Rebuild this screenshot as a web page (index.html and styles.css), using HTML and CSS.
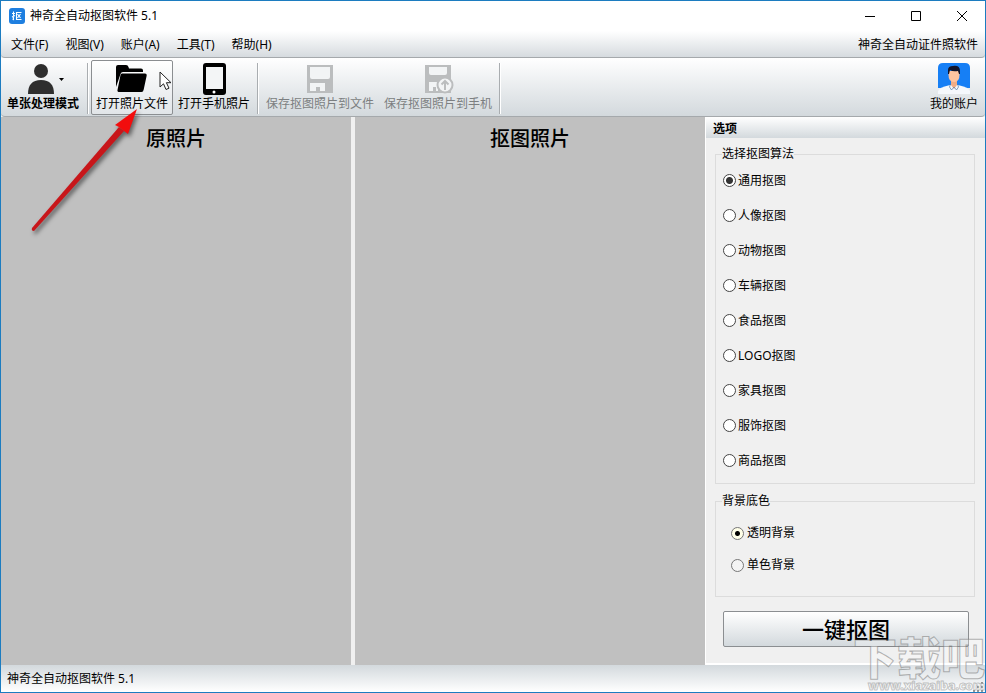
FILE: index.html
```html
<!DOCTYPE html>
<html lang="zh-CN">
<head>
  <meta charset="UTF-8">
  <meta name="viewport" content="width=device-width, initial-scale=1.0">
  <title>神奇全自动抠图软件 5.1</title>
  <link rel="stylesheet" href="styles.css">
</head>
<body>
  <div class="window">
    <header class="title-bar">
      <svg class="app-icon" width="16" height="16" viewBox="0 0 16 16" aria-hidden="true">
        <rect width="16" height="16" rx="3" fill="#1e7fe0"/>
        <path d="M3 5.500h3M4.500 3.500v8l-1-.5M3 9l3-1.500M12.500 4.500h-5v7h5M8.500 6l3 4M11.500 6l-3 4" fill="none" stroke="#fff" stroke-width="1.100"/>
      </svg>
      <span class="app-name">神奇全自动抠图软件 5.1</span>
      <div class="window-controls">
        <button type="button" aria-label="最小化"><svg width="12" height="12" viewBox="0 0 12 12"><path d="M1 6.500h10" /></svg></button>
        <button type="button" aria-label="最大化"><svg width="12" height="12" viewBox="0 0 12 12"><path d="M1.500 1.500h9v9h-9z"/></svg></button>
        <button type="button" aria-label="关闭"><svg width="12" height="12" viewBox="0 0 12 12"><path d="M1 1l10 10M11 1L1 11"/></svg></button>
      </div>
    </header>

    <nav class="menu-bar">
      <a href="#">文件(F)</a>
      <a href="#">视图(V)</a>
      <a href="#">账户(A)</a>
      <a href="#">工具(T)</a>
      <a href="#">帮助(H)</a>
      <a href="#" class="menu-right">神奇全自动证件照软件</a>
    </nav>

    <div class="toolbar">
      <button type="button" class="tool tool-mode">
        <span class="tool-icons">
          <svg width="32" height="32" viewBox="0 0 32 32">
            <circle cx="16" cy="8" r="7" fill="#2e2e2e"/>
            <path d="M3 31c0-9 4-14 13-14s13 5 13 14z" fill="#2e2e2e"/>
          </svg>
          <svg class="caret" width="5" height="3" viewBox="0 0 5 3"><path d="M0 0h5L2.500 3z"/></svg>
        </span>
        <span>单张处理模式</span>
      </button>
      <span class="separator"></span>
      <button type="button" class="tool tool-active">
        <svg width="32" height="32" viewBox="0 0 32 32">
          <path d="M0 24V4q0-2 2-2h8q2 0 2.500 2l.5 1.500h12q2 0 2 2V9H7q-2 0-2.500 2z"/>
          <path d="M6 10.500h23q2 0 1.700 2l-3 14Q27.300 29 25.500 29H3.500Q1 29 1.500 27l3-15q.3-1.500 1.500-1.500z"/>
        </svg>
        <span>打开照片文件</span>
        <svg class="cursor" width="14" height="21" viewBox="0 0 14 21" aria-hidden="true">
          <path d="M1 1v15l3.500-3.200L7 18.500l3-1.300-2.600-5.500H12z" fill="#fff" stroke="#222" stroke-width="1"/>
        </svg>
      </button>
      <button type="button" class="tool">
        <svg width="32" height="32" viewBox="0 0 32 32">
          <rect x="5" y="0" width="23" height="32" rx="3"/>
          <rect x="8" y="4" width="17" height="22" fill="#f3f5f6"/>
          <circle cx="16" cy="29" r="1.500" fill="#fff"/>
        </svg>
        <span>打开手机照片</span>
      </button>
      <span class="separator"></span>
      <button type="button" class="tool tool-save" disabled>
        <svg width="32" height="32" viewBox="0 0 32 32">
          <path d="M3 2h26v28H3z" fill="#bbbdbe"/>
          <path d="M6 4h20v10q0 2-2 2H8q-2 0-2-2zM6 20h15v8h-5v-4h-4v4H6z" fill="#f2f4f5"/>
        </svg>
        <span>保存抠图照片到文件</span>
      </button>
      <button type="button" class="tool tool-save" disabled>
        <svg width="32" height="32" viewBox="0 0 32 32">
          <path d="M3 2h26v28H3z" fill="#bbbdbe"/>
          <path d="M7 4h18v6q0 2-2 2H9q-2 0-2-2zM7 19h9v9h-2v-4h-3v4H7z" fill="#f2f4f5"/>
          <circle cx="23" cy="22" r="7.500" fill="#f2f4f5" stroke="#bbbdbe" stroke-width="2"/>
          <path d="M23 27v-9M19.500 21.500l3.500-3.500 3.500 3.500" fill="none" stroke="#bbbdbe" stroke-width="2"/>
        </svg>
        <span>保存抠图照片到手机</span>
      </button>
      <span class="separator"></span>
      <button type="button" class="tool tool-account">
        <svg width="32" height="32" viewBox="0 0 32 32">
          <path d="M5 0h22q5 0 5 5v20H0V5q0-5 5-5z" fill="#167ff5"/>
          <path d="M0 28q2-4 12-6h8q10 2 12 6v3H0z" fill="#f5f8fc"/>
          <path d="M13 16h6v6l-3 4-3-4z" fill="#f0ad86"/>
          <path d="M10.500 8h11v4q0 7-5.500 7t-5.500-7z" fill="#ffc49f"/>
          <path d="M10 11V7q0-4 5-4 7-1 7 5v3h-1l-1-3q-5 1-8-1l-1 4z" fill="#12152a"/>
          <path d="M12.500 21l-1 3 2 3 2.500-3 2.500 3 2-3-1-3" fill="none" stroke="#527ca8" stroke-width=".7"/>
        </svg>
        <span>我的账户</span>
      </button>
    </div>

    <main class="workspace">
      <section class="photo-pane"><h2>原照片</h2></section>
      <div class="splitter"></div>
      <section class="photo-pane"><h2>抠图照片</h2></section>

      <aside class="options">
        <h3>选项</h3>
        <form class="options-form">
          <fieldset class="algorithms">
            <legend>选择抠图算法</legend>
            <label><input type="radio" name="algorithm" checked>通用抠图</label>
            <label><input type="radio" name="algorithm">人像抠图</label>
            <label><input type="radio" name="algorithm">动物抠图</label>
            <label><input type="radio" name="algorithm">车辆抠图</label>
            <label><input type="radio" name="algorithm">食品抠图</label>
            <label><input type="radio" name="algorithm">LOGO抠图</label>
            <label><input type="radio" name="algorithm">家具抠图</label>
            <label><input type="radio" name="algorithm">服饰抠图</label>
            <label><input type="radio" name="algorithm">商品抠图</label>
          </fieldset>
          <fieldset class="backgrounds">
            <legend>背景底色</legend>
            <label><input type="radio" name="background" checked>透明背景</label>
            <label><input type="radio" name="background">单色背景</label>
          </fieldset>
          <button type="button" class="run-button">一键抠图</button>
        </form>
      </aside>
    </main>

    <footer class="status-bar">
      <span>神奇全自动抠图软件 5.1</span>
      <svg class="grip" width="10" height="10" viewBox="0 0 10 10" aria-hidden="true">
        <path d="M8 0h2v2H8zM4 4h2v2H4zM8 4h2v2H8zM0 8h2v2H0zM4 8h2v2H4zM8 8h2v2H8z" fill="#999"/>
      </svg>
    </footer>

    <!-- Arrow pointing at the open file button -->
    <svg class="arrow" width="120" height="134" viewBox="0 0 120 134" aria-hidden="true">
      <path d="M5 122L92 21l5 4L7 125q-3 0-2-3z" fill="#c8161a"/>
      <path d="M88 19l22-16-9 25-4-3-5-4z" fill="#f20d0d"/>
    </svg>

    <div class="watermark">
      <span class="watermark-name">下载吧</span>
      <span class="watermark-url">www.xiazaiba.com</span>
    </div>
  </div>
</body>
</html>
```

FILE: styles.css
```css
* {
  box-sizing: border-box;
}

body {
  margin: 0;
  font-family: "Noto Sans", "Noto Sans CJK SC", sans-serif;
  font-size: 12px;
  line-height: 16px;
  color: #000;
}

button {
  font: inherit;
  color: inherit;
  padding: 0;
  border: none;
  background: none;
}

a {
  color: inherit;
  text-decoration: none;
}

.window {
  position: relative;
  display: flex;
  flex-direction: column;
  min-height: 100vh;
  border: 1px solid #1c7cc0;
  background: #f0f0f0;
  overflow: hidden;
}

/* Title bar */
.title-bar {
  display: flex;
  align-items: center;
  height: 30px;
  padding-left: 8px;
  background: #fff;
}

.app-name {
  margin-left: 5px;
}

.window-controls {
  display: flex;
  margin-left: auto;
}

.window-controls button {
  display: flex;
  align-items: center;
  justify-content: center;
  width: 46px;
  height: 30px;
}

.window-controls path {
  fill: none;
  stroke: #000;
}

/* Menu */
.menu-bar {
  display: flex;
  align-items: center;
  gap: 17px;
  height: 27px;
  padding: 2px 7px 0 10px;
  border-bottom: 1px solid #a5a9ac;
  border-radius: 0 0 4px 4px;
  background: linear-gradient(#fff, #d6dbdf);
}

.menu-right {
  margin-left: auto;
}

/* Toolbar */
.toolbar {
  display: flex;
  height: 59px;
  padding: 2px 0 1px;
  border-bottom: 1px solid #a5a9ac;
  border-radius: 0 0 4px 4px;
  background: linear-gradient(#fff, #d3d9dd);
}

.tool {
  position: relative;
  display: flex;
  flex-direction: column;
  align-items: center;
  justify-content: center;
  gap: 1px;
  width: 82px;
  border: 1px solid transparent;
  border-radius: 2px;
  white-space: nowrap;
}

.tool svg {
  display: block;
}

.tool-mode {
  width: 84px;
  font-weight: bold;
}

.tool-icons {
  display: flex;
  align-items: center;
}

.caret {
  margin-left: 2px;
  margin-right: -2px;
}

.tool-active {
  border-color: #8b8e91;
  background: linear-gradient(#fff, #e1e5e8);
}

.tool-save {
  width: 118px;
  color: #7c7f81;
}

.tool-account {
  width: 62px;
  margin-left: auto;
}

.tool .cursor {
  position: absolute;
  left: 67px;
  top: 10px;
}

.separator {
  width: 2px;
  margin: 3px 2px 1px;
  border-left: 1px solid #a9adb0;
  background: #fff;
}

/* Photo panes and options */
.workspace {
  display: grid;
  grid-template-columns: 1fr 4px 1fr 280px;
  flex: 1;
}

.photo-pane {
  background: #c0c0c0;
}

.splitter {
  background: #f0f0f0;
}

.photo-pane h2 {
  margin: 8px 0 0;
  font-size: 20px;
  font-weight: 500;
  line-height: 28px;
  text-align: center;
}

.options {
  border-left: 1px solid #fff;
  border-bottom: 2px solid #fff;
  background: #f0f0f0;
}

.options h3 {
  margin: 0;
  padding: 4px 7px 1px;
  font-size: 12px;
  background: linear-gradient(#fff, #d3d9dd);
}

.options-form {
  padding: 8px 10px 16px 9px;
}

fieldset {
  margin: 0 0 9px;
  padding: 1px 7px 5px;
  border: 1px solid #dcdcdc;
}

legend {
  margin-left: -1px;
  padding: 0;
}

fieldset label {
  display: flex;
  align-items: center;
  gap: 2px;
  height: 35px;
}

input[type="radio"] {
  appearance: none;
  width: 13px;
  height: 13px;
  margin: 0;
  border: 1px solid #444;
  border-radius: 50%;
  background: #fff;
}

input[type="radio"]:checked {
  background: radial-gradient(circle, #333 3px, #fff 4px);
}

.backgrounds {
  margin-bottom: 14px;
  padding: 8px 15px 15px;
}

.backgrounds legend {
  margin-left: -9px;
}

.backgrounds label {
  gap: 3px;
  height: 32px;
}

.backgrounds input[type="radio"] {
  border-color: #777;
  background: #f4f4f4;
}

.backgrounds input[type="radio"]:checked {
  background: radial-gradient(circle, #000 2px, #ffffe8 3px);
}

.run-button {
  display: block;
  width: calc(100% - 14px);
  height: 36px;
  margin-left: 8px;
  border: 1px solid #8b8e91;
  border-radius: 2px;
  background: linear-gradient(#fff, #d3d9dd);
  font-size: 22px;
  font-weight: 500;
  line-height: 32px;
}

/* Status bar */
.status-bar {
  display: flex;
  align-items: center;
  justify-content: space-between;
  height: 27px;
  padding: 0 2px 0 6px;
  background: linear-gradient(#d3d9dd, #fff);
}

.grip {
  align-self: flex-end;
}

/* Overlays */
.arrow {
  position: absolute;
  left: 26px;
  top: 105px;
  filter: drop-shadow(2px 3px 2px rgba(0, 0, 0, 0.5));
  pointer-events: none;
}

.watermark {
  position: absolute;
  right: 0;
  bottom: 0;
  display: flex;
  flex-direction: column;
  align-items: flex-end;
  color: rgba(255, 255, 255, 0.3);
  font-weight: 900;
  pointer-events: none;
}

.watermark-name {
  font-size: 44px;
  line-height: 44px;
  -webkit-text-stroke: 1px rgba(110, 110, 110, 0.5);
}

.watermark-url {
  font-size: 12px;
  line-height: 12px;
  -webkit-text-stroke: 1px rgba(110, 110, 110, 0.4);
}
```
